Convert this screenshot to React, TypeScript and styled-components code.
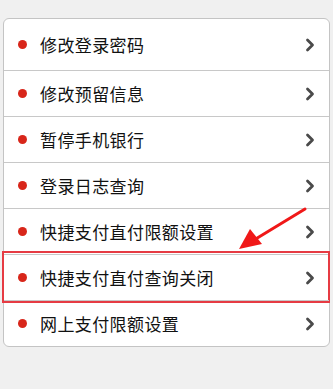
import styled, { createGlobalStyle } from "styled-components";

const GlobalStyle = createGlobalStyle`
  html, body {
    margin: 0;
    padding: 0;
    background: #f0f0f0;
    font-family: "Noto Sans CJK SC", "Noto Sans", sans-serif;
  }
`;

const Page = styled.div`
  position: relative;
  width: 333px;
  height: 389px;
  padding: 18px 3px 0 3px;
  box-sizing: border-box;
`;

const Card = styled.div`
  background: #fff;
  border: 1px solid #c4c4c4;
  border-radius: 6px;
  display: flex;
  flex-direction: column;
`;

const Row = styled.div<{ $first?: boolean; $marked?: boolean }>`
  position: relative;
  display: flex;
  align-items: center;
  height: ${(p) => (p.$first ? "51px" : "45px")};
  padding: 0 14px 0 14px;
  border-top: ${(p) => (p.$first ? "none" : "1px solid #c8c8c8")};

  ${(p) =>
    p.$marked &&
    `
    &::after {
      content: "";
      position: absolute;
      left: -2px;
      right: -1px;
      top: -4px;
      bottom: -3px;
      border: 2.5px solid #e63b43;
      pointer-events: none;
    }
  `}
`;

const Dot = styled.span`
  width: 9px;
  height: 9px;
  border-radius: 50%;
  background: #d8261a;
  flex-shrink: 0;
`;

const Label = styled.span`
  flex: 1;
  margin-left: 13px;
  font-size: 17px;
  color: #111;
  letter-spacing: 0.4px;
`;

const Chevron = () => (
  <svg width="10" height="14" viewBox="0 0 10 14">
    <polyline
      points="2.5,2 7.5,7 2.5,12"
      fill="none"
      stroke="#4a4a4a"
      strokeWidth="2.8"
      strokeLinecap="round"
      strokeLinejoin="round"
    />
  </svg>
);

const Arrow = styled.svg`
  position: absolute;
  left: 0;
  top: 0;
  pointer-events: none;
`;

const items = [
  "修改登录密码",
  "修改预留信息",
  "暂停手机银行",
  "登录日志查询",
  "快捷支付直付限额设置",
  "快捷支付直付查询关闭",
  "网上支付限额设置",
];

export default function App() {
  return (
    <>
      <GlobalStyle />
      <Page>
        <Card>
          {items.map((t, i) => (
            <Row key={t} $first={i === 0} $marked={i === 5}>
              <Dot />
              <Label>{t}</Label>
              <Chevron />
            </Row>
          ))}
        </Card>
        <Arrow width="333" height="389" viewBox="0 0 333 389">
          <line x1="305" y1="209" x2="254" y2="240" stroke="#f01818" strokeWidth="3" strokeLinecap="round" />
          <polygon points="239,249 250,229 262,244" fill="#f01818" />
        </Arrow>
      </Page>
    </>
  );
}
